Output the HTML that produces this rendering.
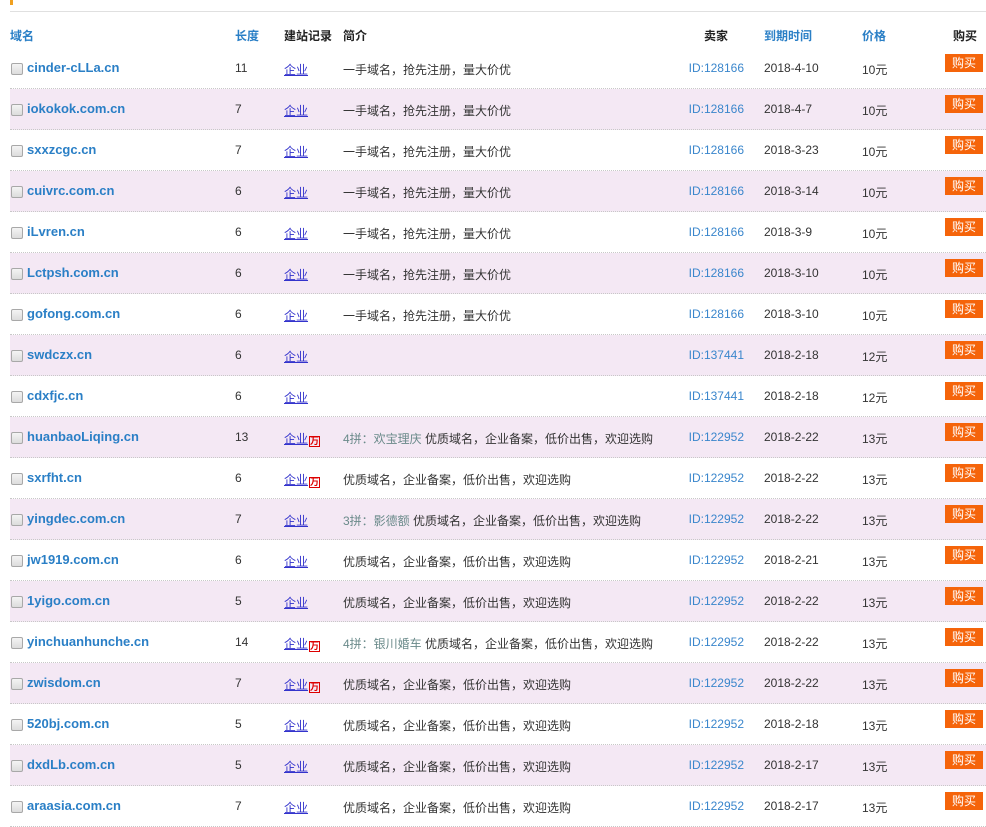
<!DOCTYPE html>
<html><head><meta charset="utf-8"><style>
*{margin:0;padding:0;box-sizing:border-box}
body{width:986px;height:816px;overflow:hidden;background:#fff;font-family:"Liberation Sans","Noto Sans CJK SC",sans-serif;font-size:12px;color:#333;position:relative}
.a{position:absolute;white-space:nowrap}
.row{position:absolute;left:10px;width:976px;height:41px;border-bottom:1px dotted #c8c8c8}
.p{background:#f4e8f4}
.cb{position:absolute;left:1px;top:15px;width:12px;height:12px;border:1px solid #a8a8a8;border-radius:2px;background:linear-gradient(#f4f4f4,#dcdcdc)}
.dm{position:absolute;left:17px;top:12px;font-size:13px;font-weight:bold;color:#2a7fc6}
.c{position:absolute;top:13px}
.q{color:#3333cc;text-decoration:underline}
.w{display:inline-block;width:11px;height:11px;border:1px solid #d00;color:#d00;font-size:9px;line-height:9px;text-align:center;font-weight:bold;vertical-align:-1px;margin-left:1px}
.id{position:absolute;top:13px;right:242px;color:#3a86cc}
.buy{position:absolute;left:935px;top:6px;width:38px;height:18px;background:#f5640a;color:#fff;font-size:12px;line-height:18px;text-align:center}
.g{color:#6a8a8a}
.h{position:absolute;top:27px;font-weight:bold;font-size:12px}
</style></head><body>
<div class="a" style="left:10px;top:0;width:3px;height:5px;background:#f0a020"></div>
<div class="a" style="left:10px;top:11px;width:976px;height:1px;background:#e0e0e0"></div>
<div class="h" style="left:10px;color:#2a7fc6">域名</div>
<div class="h" style="left:235px;color:#2a7fc6">长度</div>
<div class="h" style="left:284px;color:#222">建站记录</div>
<div class="h" style="left:343px;color:#222">简介</div>
<div class="h" style="left:704px;color:#222">卖家</div>
<div class="h" style="left:764px;color:#2a7fc6">到期时间</div>
<div class="h" style="left:862px;color:#2a7fc6">价格</div>
<div class="h" style="left:953px;color:#222">购买</div>
<div id="rows"></div>
<script>
var d=[
["cinder-cLLa.cn",11,0,"","一手域名，抢先注册，量大价优","128166","2018-4-10","10元"],
["iokokok.com.cn",7,0,"","一手域名，抢先注册，量大价优","128166","2018-4-7","10元"],
["sxxzcgc.cn",7,0,"","一手域名，抢先注册，量大价优","128166","2018-3-23","10元"],
["cuivrc.com.cn",6,0,"","一手域名，抢先注册，量大价优","128166","2018-3-14","10元"],
["iLvren.cn",6,0,"","一手域名，抢先注册，量大价优","128166","2018-3-9","10元"],
["Lctpsh.com.cn",6,0,"","一手域名，抢先注册，量大价优","128166","2018-3-10","10元"],
["gofong.com.cn",6,0,"","一手域名，抢先注册，量大价优","128166","2018-3-10","10元"],
["swdczx.cn",6,0,"","","137441","2018-2-18","12元"],
["cdxfjc.cn",6,0,"","","137441","2018-2-18","12元"],
["huanbaoLiqing.cn",13,1,"4拼：欢宝理庆 ","优质域名，企业备案，低价出售，欢迎选购","122952","2018-2-22","13元"],
["sxrfht.cn",6,1,"","优质域名，企业备案，低价出售，欢迎选购","122952","2018-2-22","13元"],
["yingdec.com.cn",7,0,"3拼：影德额 ","优质域名，企业备案，低价出售，欢迎选购","122952","2018-2-22","13元"],
["jw1919.com.cn",6,0,"","优质域名，企业备案，低价出售，欢迎选购","122952","2018-2-21","13元"],
["1yigo.com.cn",5,0,"","优质域名，企业备案，低价出售，欢迎选购","122952","2018-2-22","13元"],
["yinchuanhunche.cn",14,1,"4拼：银川婚车 ","优质域名，企业备案，低价出售，欢迎选购","122952","2018-2-22","13元"],
["zwisdom.cn",7,1,"","优质域名，企业备案，低价出售，欢迎选购","122952","2018-2-22","13元"],
["520bj.com.cn",5,0,"","优质域名，企业备案，低价出售，欢迎选购","122952","2018-2-18","13元"],
["dxdLb.com.cn",5,0,"","优质域名，企业备案，低价出售，欢迎选购","122952","2018-2-17","13元"],
["araasia.com.cn",7,0,"","优质域名，企业备案，低价出售，欢迎选购","122952","2018-2-17","13元"]];
var h="";
d.forEach(function(r,i){
h+='<div class="row'+(i%2?' p':'')+'" style="top:'+(48+41*i)+'px"><div class="cb"></div><div class="dm">'+r[0]+'</div>'+
'<div class="c" style="left:225px">'+r[1]+'</div><div class="c" style="left:274px"><span class="q">企业</span>'+(r[2]?'<span class="w">万</span>':'')+'</div>'+
'<div class="c" style="left:333px"><span class="g">'+r[3]+'</span>'+r[4]+'</div><div class="id">ID:'+r[5]+'</div>'+
'<div class="c" style="left:754px">'+r[6]+'</div><div class="c" style="left:852px">'+r[7]+'</div><div class="buy">购买</div></div>';});
document.getElementById("rows").innerHTML=h;
</script>
</body></html>
